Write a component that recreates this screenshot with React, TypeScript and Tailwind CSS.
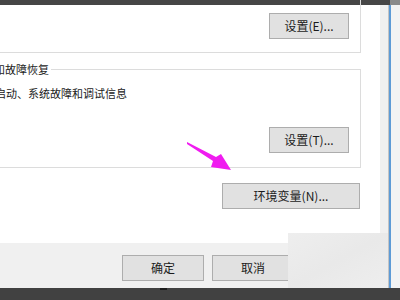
import type { ReactNode } from 'react';

function WinButton({ width, children }: { width: number; children: ReactNode }) {
  return (
    <div
      className="h-[26px] border border-[#adadad] bg-[#e1e1e1] flex items-center justify-center leading-none"
      style={{ width }}
    >
      {children}
    </div>
  );
}

export default function App() {
  return (
    <div className="relative w-[400px] h-[300px] overflow-hidden flex flex-col bg-[#f0f0f0] font-['Noto_Sans_CJK_SC','Noto_Sans',sans-serif] text-[12px] text-[#1b1b1b]">
      {/* top edge of the window behind */}
      <div className="flex h-[5px]">
        <div className="flex-1 bg-[#464646]" />
        <div className="w-[10px] bg-[#8a8a8a]" />
      </div>

      <div className="flex h-[283px]">
        <div className="w-[388px] flex flex-col bg-[#f0f0f0]">
          {/* dialog body */}
          <div className="w-[380px] h-[238px] bg-white pr-[19px] flex flex-col">
            {/* performance group (cut off at top) */}
            <div className="-mt-[21px] -ml-[40px] h-[69px] border border-[#dcdcdc] flex items-end justify-end pr-[11px] pb-[13px]">
              <WinButton width={80}>设置(E)...</WinButton>
            </div>

            {/* startup and recovery group */}
            <div className="relative mt-[16px] -ml-[40px] h-[99px] border border-[#dcdcdc] flex flex-col">
              <span className="absolute top-[-9px] left-[9px] px-[2px] bg-white leading-[16px] text-[11px] whitespace-nowrap">
                启动和故障恢复
              </span>
              <div className="mt-[15px] pl-[34px] leading-[16px] text-[11px] whitespace-nowrap">
                启动、系统故障和调试信息
              </div>
              <div className="mt-[26px] self-end mr-[11px]">
                <WinButton width={80}>设置(T)...</WinButton>
              </div>
            </div>

            <div className="mt-[15px] self-end mr-[1px]">
              <WinButton width={138}>环境变量(N)...</WinButton>
            </div>
          </div>

          {/* dialog footer */}
          <div className="h-[45px] flex pt-[12px] pl-[122px] gap-[8px]">
            <WinButton width={82}>确定</WinButton>
            <WinButton width={82}>取消</WinButton>
          </div>
        </div>

        {/* window frame on the right */}
        <div className="w-[1px] bg-[#c4c4c4]" />
        <div className="w-[2px] bg-[#5e9bd6]" />
        <div className="flex-1 bg-[#f3f3f3]" />
      </div>

      {/* taskbar */}
      <div className="relative h-[12px] bg-[#414141]">
        <div className="absolute left-[160px] top-0 w-[7px] h-[2px] bg-[#1c1c1c]" />
      </div>

      {/* watermark patch */}
      <div className="absolute left-[288px] top-[233px] w-[100px] h-[55px] bg-gradient-to-br from-[#eeeeee] via-[#e9e9e9] to-[#eeeeee]" />

      {/* magenta annotation arrow */}
      <svg className="absolute left-0 top-0 pointer-events-none" width="400" height="300" viewBox="0 0 400 300">
        <polygon
          points="187,142 216,157 221,154 231,170 211,167 213,161 187,144"
          fill="#f01cf0"
        />
      </svg>
    </div>
  );
}
